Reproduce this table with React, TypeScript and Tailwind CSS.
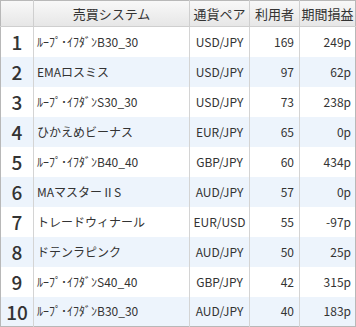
import React from "react";

type Row = {
  rank: number;
  name: string;
  pair: string;
  users: number;
  profit: string;
};

const rows: Row[] = [
  { rank: 1, name: "ﾙｰﾌﾟ･ｲﾌﾀﾞﾝB30_30", pair: "USD/JPY", users: 169, profit: "249p" },
  { rank: 2, name: "EMAロスミス", pair: "USD/JPY", users: 97, profit: "62p" },
  { rank: 3, name: "ﾙｰﾌﾟ･ｲﾌﾀﾞﾝS30_30", pair: "USD/JPY", users: 73, profit: "238p" },
  { rank: 4, name: "ひかえめビーナス", pair: "EUR/JPY", users: 65, profit: "0p" },
  { rank: 5, name: "ﾙｰﾌﾟ･ｲﾌﾀﾞﾝB40_40", pair: "GBP/JPY", users: 60, profit: "434p" },
  { rank: 6, name: "MAマスターⅡS", pair: "AUD/JPY", users: 57, profit: "0p" },
  { rank: 7, name: "トレードウィナール", pair: "EUR/USD", users: 55, profit: "-97p" },
  { rank: 8, name: "ドテンラピンク", pair: "AUD/JPY", users: 50, profit: "25p" },
  { rank: 9, name: "ﾙｰﾌﾟ･ｲﾌﾀﾞﾝS40_40", pair: "GBP/JPY", users: 42, profit: "315p" },
  { rank: 10, name: "ﾙｰﾌﾟ･ｲﾌﾀﾞﾝB30_30", pair: "AUD/JPY", users: 40, profit: "183p" },
];

const font = { fontFamily: '"Noto Sans CJK JP", "Noto Sans", sans-serif' };

export default function App() {
  return (
    <div className="w-[356px] h-[327px] bg-white overflow-hidden" style={font}>
      <table className="w-[355px] table-fixed border-collapse border border-[#b8b8b8] text-[#333] text-[12px] leading-none">
        <colgroup>
          <col className="w-[33px]" />
          <col className="w-[156px]" />
          <col className="w-[60px]" />
          <col className="w-[50px]" />
          <col className="w-[56px]" />
        </colgroup>
        <thead>
          <tr className="bg-gradient-to-b from-[#f8f8f8] to-[#e6e6e6] text-[13px]">
            <th className="h-[26px] border-r border-b border-[#cfcfcf] font-normal p-0"></th>
            <th className="h-[26px] border-r border-b border-[#cfcfcf] font-normal p-0 whitespace-nowrap">売買システム</th>
            <th className="h-[26px] border-r border-b border-[#cfcfcf] font-normal p-0 whitespace-nowrap">通貨ペア</th>
            <th className="h-[26px] border-r border-b border-[#cfcfcf] font-normal p-0 whitespace-nowrap">利用者</th>
            <th className="h-[26px] border-b border-[#cfcfcf] font-normal p-0 whitespace-nowrap">期間損益</th>
          </tr>
        </thead>
        <tbody>
          {rows.map((r) => (
            <tr key={r.rank} className={r.rank % 2 === 0 ? "bg-[#edf4fc]" : "bg-white"}>
              <td className="h-[30px] border-r border-[#d4d4d4] text-center text-[19px] font-medium p-0">
                {r.rank}
              </td>
              <td className="h-[30px] border-r border-[#d4d4d4] p-0 pl-[3px] whitespace-nowrap overflow-hidden">
                {r.name}
              </td>
              <td className="h-[30px] border-r border-[#d4d4d4] text-center p-0">{r.pair}</td>
              <td className="h-[30px] border-r border-[#d4d4d4] text-right p-0 pr-[5px]">{r.users}</td>
              <td className="h-[30px] text-right p-0 pr-[4px]">{r.profit}</td>
            </tr>
          ))}
        </tbody>
      </table>
    </div>
  );
}
